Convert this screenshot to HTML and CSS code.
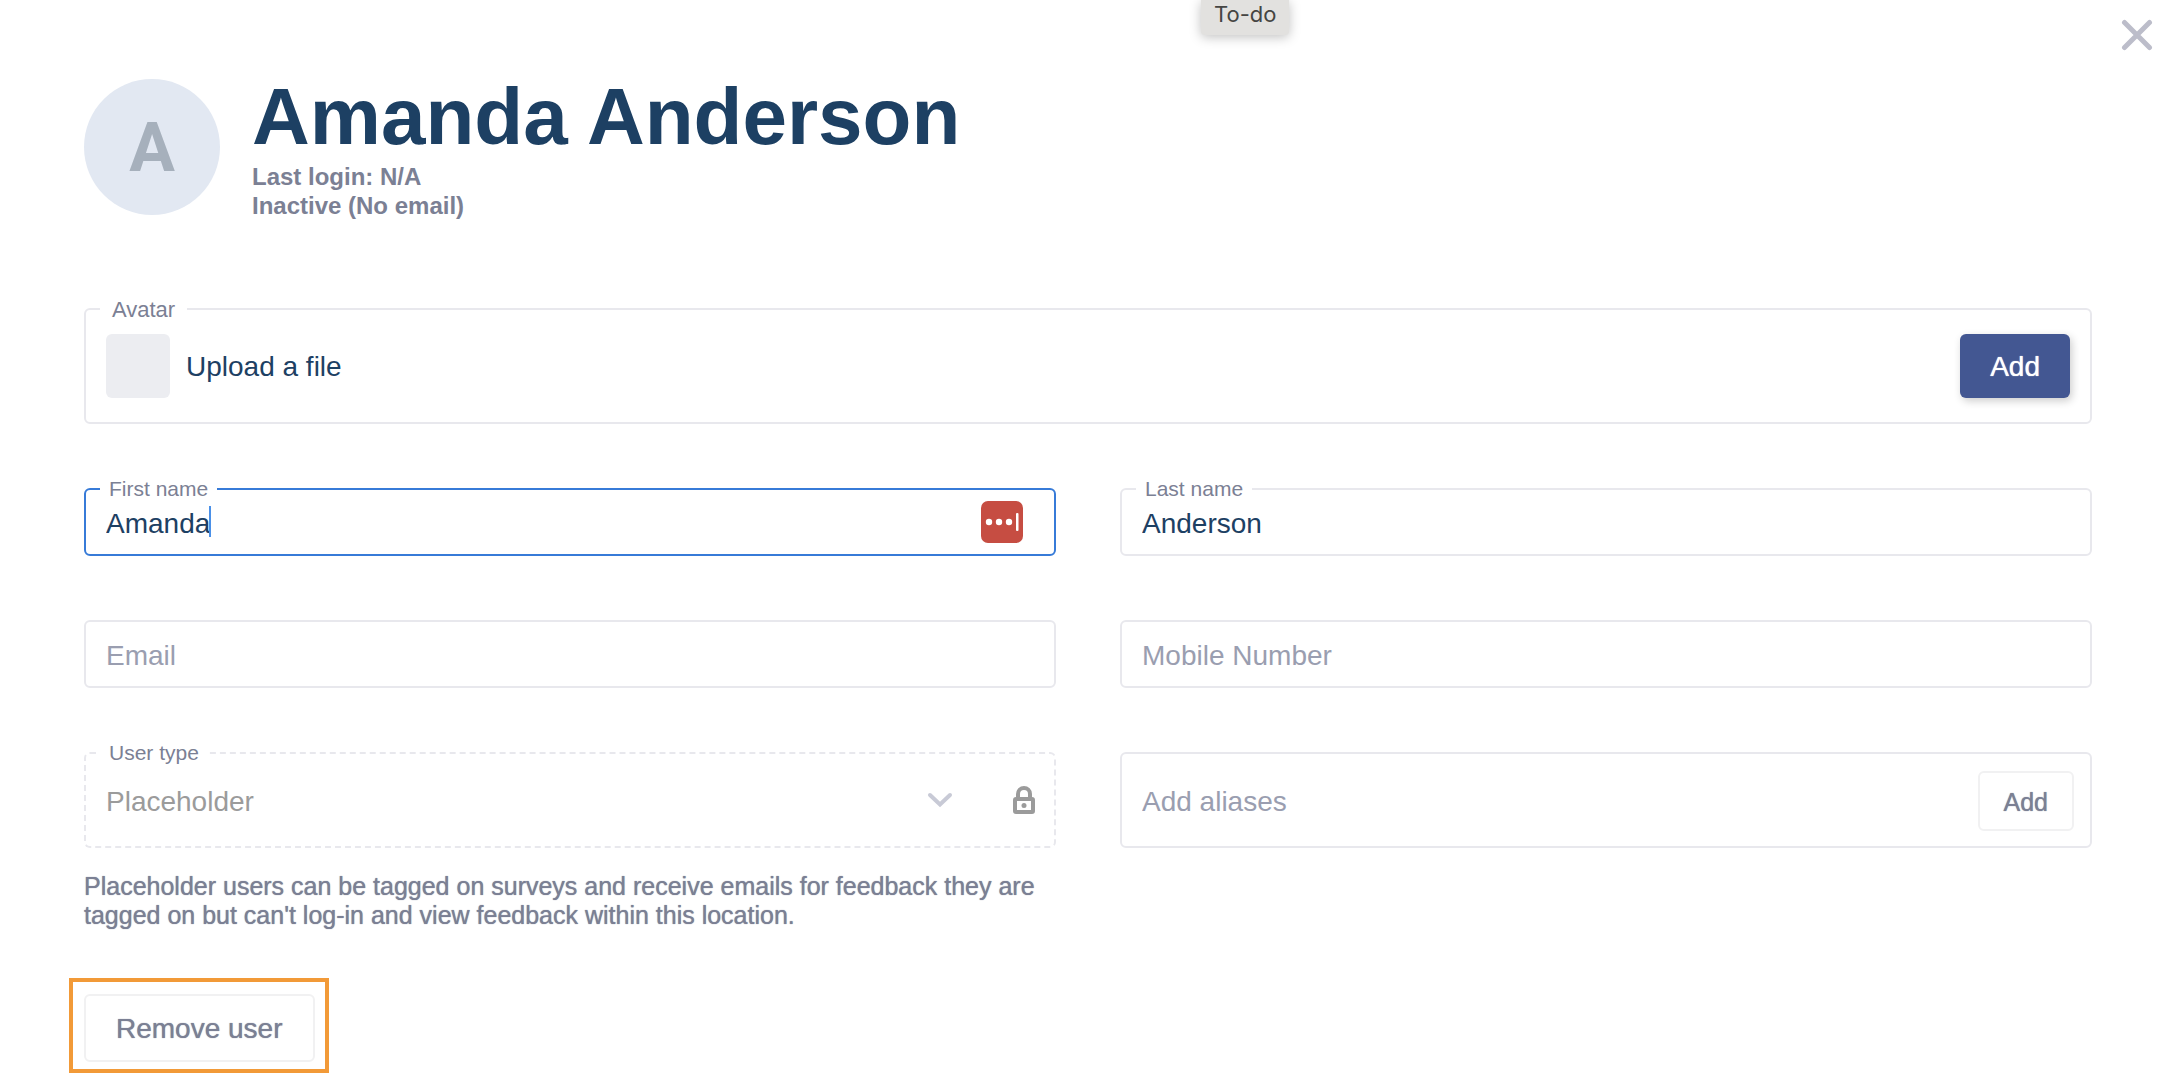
FILE: index.html
```html
<!DOCTYPE html>
<html lang="en">
<head>
  <meta charset="UTF-8">
  <meta name="viewport" content="width=device-width, initial-scale=1.0">
  <title>Amanda Anderson</title>
  <link rel="stylesheet" href="styles.css">
</head>
<body>
  <div class="tooltip">To-do</div>
  <button class="close" type="button" aria-label="Close">
    <svg width="32" height="32" viewBox="0 0 32 32" fill="none" stroke="#bcbdca" stroke-width="5" stroke-linecap="round">
      <path d="M3.500 3.500L28.500 28.500M28.500 3.500L3.500 28.500"/>
    </svg>
  </button>

  <main class="panel">
    <header class="profile">
      <div class="initial">A</div>
      <div>
        <h1>Amanda Anderson</h1>
        <p class="status">Last login: N/A<br>Inactive (No email)</p>
      </div>
    </header>

    <form class="user-form">
      <div class="field upload">
        <span class="label label-large">Avatar</span>
        <div class="swatch"></div>
        <span class="upload-text">Upload a file</span>
        <button class="btn btn-primary" type="button">Add</button>
      </div>

      <div class="grid">
        <div class="field focused">
          <label class="label" for="firstName">First name</label>
          <input id="firstName" type="text" value="Amanda">
          <span class="caret"></span>
          <svg class="manager" width="42" height="42" viewBox="0 0 42 42">
            <rect width="42" height="42" rx="7" fill="#c64d42"/>
            <g fill="#fff">
              <circle cx="8" cy="21" r="3.200"/>
              <circle cx="18" cy="21" r="3.200"/>
              <circle cx="28" cy="21" r="3.200"/>
              <rect x="35" y="12" width="2.500" height="18" rx="1"/>
            </g>
          </svg>
        </div>

        <div class="field">
          <label class="label" for="lastName">Last name</label>
          <input id="lastName" type="text" value="Anderson">
        </div>

        <div class="field">
          <input type="email" placeholder="Email" aria-label="Email">
        </div>

        <div class="field">
          <input type="tel" placeholder="Mobile Number" aria-label="Mobile Number">
        </div>

        <div>
          <div class="field tall locked">
            <label class="label" for="userType">User type</label>
            <select id="userType" disabled>
              <option>Placeholder</option>
            </select>
            <svg class="chevron" width="26" height="16" viewBox="0 0 26 16" fill="none" stroke="#c8cad6" stroke-width="4" stroke-linecap="round">
              <path d="M3 3L13 12.500L23 3"/>
            </svg>
            <svg class="lock" width="22" height="28" viewBox="0 0 22 28" fill="none" stroke="#9b9b9b" stroke-width="4">
              <rect x="2" y="13" width="18" height="13" rx="1"/>
              <path d="M5 13V8a6 6 0 0 1 12 0v5"/>
              <circle cx="11" cy="19.500" r="2.500" fill="#9b9b9b" stroke="none"/>
            </svg>
          </div>
          <p class="hint">Placeholder users can be tagged on surveys and receive emails for feedback they are tagged on but can't log-in and view feedback within this location.</p>
        </div>

        <div class="field tall">
          <input type="text" placeholder="Add aliases" aria-label="Add aliases">
          <button class="btn btn-small" type="button">Add</button>
        </div>
      </div>

      <div class="highlight">
        <button class="btn btn-outline" type="button">Remove user</button>
      </div>
    </form>
  </main>
</body>
</html>
```

FILE: styles.css
```css
* {
  box-sizing: border-box;
}

body {
  margin: 0;
  background-color: #fff;
  color: #1d4063;
  font-family: "Liberation Sans", Arial, sans-serif;
  font-size: 28px;
}

h1,
p {
  margin: 0;
}

.panel {
  padding: 74px 86px 0 84px;
}

.tooltip {
  position: absolute;
  top: 0;
  left: 1201px;
  height: 35px;
  padding: 0 13px;
  background-color: #e2e1df;
  color: #454543;
  border-radius: 0 0 4px 4px;
  box-shadow: 0 2px 12px rgba(0, 0, 0, 0.25);
  font-family: Inter, sans-serif;
  font-size: 22px;
  line-height: 29px;
}

.close {
  position: absolute;
  top: 19px;
  right: 25px;
  padding: 0;
  border: none;
  background: none;
  cursor: pointer;
}

.close svg {
  display: block;
}

/* Header */
.profile {
  display: flex;
  align-items: center;
  gap: 32px;
  margin-bottom: 88px;
}

.initial {
  width: 136px;
  height: 136px;
  border-radius: 50%;
  background-color: #e2e8f2;
  color: #a6b0bc;
  font-family: Roboto, sans-serif;
  font-size: 68px;
  font-weight: bold;
  line-height: 138px;
  text-align: center;
}

h1 {
  font-size: 80px;
  line-height: 86px;
}

.status {
  margin-top: 2px;
  color: #7b8094;
  font-size: 24px;
  font-weight: bold;
  line-height: 29px;
}

/* Fields */
.field {
  position: relative;
  display: flex;
  align-items: center;
  height: 68px;
  padding: 0 20px;
  border: 2px solid #e8e8ed;
  border-radius: 6px;
}

.tall {
  height: 96px;
}

.focused {
  border-color: #377bd8;
}

.locked {
  border-style: dashed;
}

.label {
  position: absolute;
  top: -14px;
  left: 14px;
  padding: 0 9px;
  background-color: #fff;
  color: #7b8094;
  font-size: 21px;
  line-height: 26px;
}

.label-large {
  padding: 0 12px;
  font-size: 22px;
  line-height: 28px;
}

.field input,
.field select {
  flex: 1;
  min-width: 0;
  height: 100%;
  padding: 3px 0 0;
  border: none;
  outline: none;
  background: none;
  color: #1d4063;
  font: inherit;
}

.field input::placeholder {
  color: #9a9eb0;
  opacity: 1;
}

.field select {
  appearance: none;
  color: #9b9b9b;
  opacity: 1;
}

.caret {
  position: absolute;
  top: 16px;
  left: 123px;
  width: 2px;
  height: 31px;
  background-color: #4a90e8;
}

.manager {
  margin-right: 11px;
}

.chevron {
  margin-right: 60px;
}

.lock {
  margin-right: -1px;
}

.upload {
  height: 116px;
  margin-bottom: 64px;
}

.swatch {
  width: 64px;
  height: 64px;
  margin-right: 16px;
  border-radius: 6px;
  background-color: #ecedf1;
}

.upload-text {
  flex: 1;
  padding-top: 2px;
}

.grid {
  display: grid;
  grid-template-columns: 1fr 1fr;
  gap: 64px;
}

.hint {
  margin-top: 24px;
  color: #7b8094;
  font-size: 25px;
  line-height: 29px;
  text-shadow: 0 0 1px currentColor;
}

/* Buttons */
.btn {
  border: 2px solid #f1f1f2;
  border-radius: 6px;
  background-color: #fff;
  color: #7b8094;
  font: inherit;
  text-shadow: 0 0 1px currentColor;
  cursor: pointer;
}

.btn-primary {
  height: 64px;
  padding: 2px 30px 0;
  border: none;
  background-color: #435792;
  color: #fff;
  box-shadow: 2px 3px 8px rgba(0, 0, 0, 0.2);
}

.btn-small {
  height: 60px;
  margin: 2px -4px 0 0;
  padding: 2px 24px 0;
  font-size: 25px;
}

.btn-outline {
  height: 68px;
  padding: 2px 30px 0;
}

.highlight {
  width: fit-content;
  margin: 48px 0 0 -15px;
  padding: 12px 10px 7px 11px;
  border: 4px solid #f29a38;
}

.highlight .btn {
  display: block;
}
```
